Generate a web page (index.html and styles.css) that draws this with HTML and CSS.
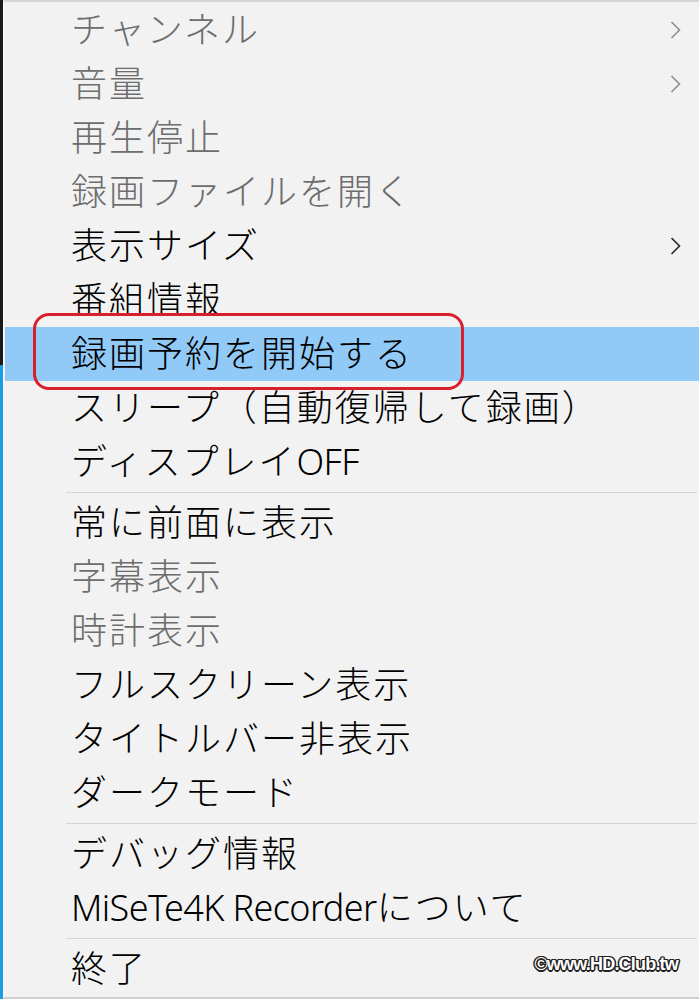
FILE: index.html
```html
<!DOCTYPE html>
<html lang="ja">
<head>
<meta charset="utf-8">
<title>Menu</title>
<link rel="stylesheet" href="styles.css">
</head>
<body>
<div class="screen">
  <div class="strip"></div>
  <div class="menu">
    <div class="item disabled"><span class="label">チャンネル</span><svg class="chev" viewBox="0 0 11 18"><polyline points="1.5,1 9.5,9 1.5,17"/></svg></div>
    <div class="item disabled"><span class="label">音量</span><svg class="chev" viewBox="0 0 11 18"><polyline points="1.5,1 9.5,9 1.5,17"/></svg></div>
    <div class="item disabled"><span class="label">再生停止</span></div>
    <div class="item disabled"><span class="label">録画ファイルを開く</span></div>
    <div class="item"><span class="label">表示サイズ</span><svg class="chev" viewBox="0 0 11 18"><polyline points="1.5,1 9.5,9 1.5,17"/></svg></div>
    <div class="item"><span class="label">番組情報</span></div>
    <div class="item active"><span class="label">録画予約を開始する</span><span class="mark"></span></div>
    <div class="item"><span class="label">スリープ（自動復帰して録画）</span></div>
    <div class="item"><span class="label">ディスプレイ<span class="latin">OFF</span></span></div>
    <div class="sep"></div>
    <div class="item"><span class="label">常に前面に表示</span></div>
    <div class="item disabled"><span class="label">字幕表示</span></div>
    <div class="item disabled"><span class="label">時計表示</span></div>
    <div class="item"><span class="label">フルスクリーン表示</span></div>
    <div class="item"><span class="label">タイトルバー非表示</span></div>
    <div class="item"><span class="label">ダークモード</span></div>
    <div class="sep"></div>
    <div class="item"><span class="label">デバッグ情報</span></div>
    <div class="item"><span class="label"><span class="latin">MiSeTe4K Recorder</span>について</span></div>
    <div class="sep"></div>
    <div class="item"><span class="label">終了</span></div>
    <div class="watermark">©www.HD.Club.tw</div>
  </div>
</div>
</body>
</html>
```
FILE: styles.css
```css
html, body {
  margin: 0;
  padding: 0;
  background: #f2f2f2;
}
.screen {
  display: flex;
  width: 699px;
  height: 999px;
  overflow: hidden;
}
.strip {
  width: 3px;
  flex: none;
  background: linear-gradient(to bottom, #1a1a1a 0, #1a1a1a 365px, #1c9be6 365px, #1c9be6 100%);
}
.menu {
  position: relative;
  flex: 1;
  display: flex;
  flex-direction: column;
  background: #f2f2f2;
  border-top: 2px solid #d6d6d6;
  border-left: 1px solid #fbfbfb;
  border-bottom: 2px solid #d0d0d0;
  padding-top: 1px;
  padding-left: 1px;
  font-family: "Noto Sans", "Noto Sans CJK JP", sans-serif;
  font-size: 36px;
  font-weight: 300;
  color: #000;
}
.item {
  position: relative;
  height: 54px;
  flex: none;
  display: flex;
  align-items: center;
  justify-content: space-between;
  padding-left: 66px;
  padding-right: 16px;
  line-height: 1;
}
.label {
  white-space: nowrap;
  letter-spacing: 2px;
}
.latin {
  letter-spacing: -0.6px;
  font-weight: 300;
}
.item.disabled {
  color: #6d6d6d;
}
.item.active {
  background: #91c9f7;
}
.chev {
  width: 11px;
  height: 18px;
  margin-right: 2px;
  fill: none;
  stroke: #262626;
  stroke-width: 1.6;
}
.item.disabled .chev {
  stroke: #8e8e8e;
}
.sep {
  height: 7px;
  flex: none;
  margin-left: 61px;
  margin-right: 2px;
  display: flex;
  align-items: center;
}
.sep::before {
  content: "";
  display: block;
  width: 100%;
  height: 1px;
  background: #d5d5d5;
}
.mark {
  position: absolute;
  left: 28px;
  top: -14px;
  width: 425px;
  height: 71px;
  border: 3.5px solid #d81f2b;
  border-radius: 16px;
}
.watermark {
  position: absolute;
  right: 21px;
  bottom: 22px;
  font-family: "Liberation Sans", sans-serif;
  font-weight: bold;
  font-size: 18px;
  letter-spacing: -0.8px;
  color: #fff;
  text-shadow: -1px -1px 0 #222, 1px -1px 0 #222, -1px 1px 0 #222, 1px 1px 0 #222, 0 1.5px 0 #222, 0 -1.5px 0 #222, 1.5px 0 0 #222, -1.5px 0 0 #222;
}
```
